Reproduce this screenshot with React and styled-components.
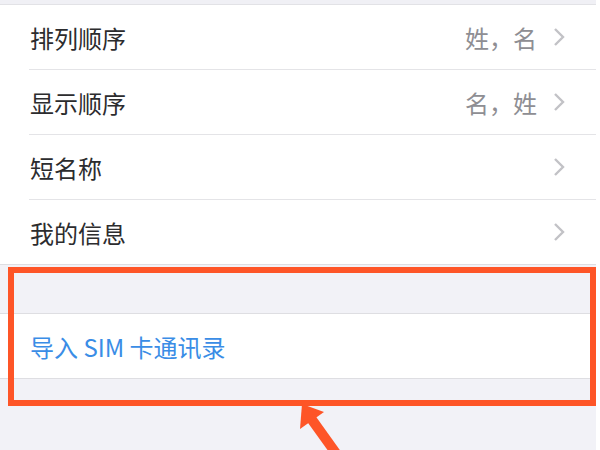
import React from "react";
import styled, { createGlobalStyle } from "styled-components";

const rows = [
  { label: "排列顺序", value: "姓，名" },
  { label: "显示顺序", value: "名，姓" },
  { label: "短名称", value: "" },
  { label: "我的信息", value: "" },
];

const Chevron = () => (
  <svg width="12" height="20" viewBox="0 0 12 20">
    <path d="M2 2 L10 10 L2 18" fill="none" stroke="#c2c2c6" strokeWidth="2.4" />
  </svg>
);

const App = () => {
  return (
    <>
      <GlobalStyle />
      <Screen>
        <TopStrip />
        <Group>
          {rows.map((row) => (
            <Row key={row.label}>
              <Label>{row.label}</Label>
              <Right>
                {row.value && <Value>{row.value}</Value>}
                <Chevron />
              </Right>
            </Row>
          ))}
        </Group>
        <Gap />
        <Group>
          <Row>
            <Action>导入 SIM 卡通讯录</Action>
          </Row>
        </Group>
        <Fill />
        <Highlight />
        <Arrow width="80" height="60" viewBox="0 0 80 60">
          <polygon points="12,9 10,34 34,17" fill="#fe5527" />
          <line x1="20" y1="22" x2="58" y2="75" stroke="#fe5527" strokeWidth="10" />
        </Arrow>
      </Screen>
    </>
  );
};

const GlobalStyle = createGlobalStyle`
  html, body {
    margin: 0;
    padding: 0;
    background: #ffffff;
  }
`;

const Screen = styled.div`
  position: relative;
  width: 596px;
  height: 450px;
  display: flex;
  flex-direction: column;
  background: #f2f2f7;
  overflow: hidden;
  font-family: "Noto Sans CJK SC", "Noto Sans", sans-serif;
`;

const TopStrip = styled.div`
  height: 4px;
  background: #f0f0f5;
  border-bottom: 1px solid #e2e2e6;
`;

const Group = styled.div`
  background: #ffffff;
  border-bottom: 1px solid #dedee2;
`;

const Row = styled.div`
  height: 64px;
  margin-left: 29px;
  padding-left: 1px;
  padding-right: 31px;
  display: flex;
  align-items: center;
  justify-content: space-between;
  border-bottom: 1px solid #e4e4e7;
  &:last-child {
    border-bottom: none;
  }
`;

const Label = styled.div`
  font-size: 24px;
  color: #2c2c2e;
`;

const Right = styled.div`
  display: flex;
  align-items: center;
  gap: 16px;
`;

const Value = styled.div`
  font-size: 24px;
  color: #8e8e93;
`;

const Action = styled.div`
  font-size: 24px;
  color: #3a8de6;
`;

const Gap = styled.div`
  height: 48px;
  border-bottom: 1px solid #dedee2;
`;

const Fill = styled.div`
  flex: 1;
`;

const Highlight = styled.div`
  position: absolute;
  left: 8px;
  top: 267px;
  width: 588px;
  height: 139px;
  box-sizing: border-box;
  border: 6px solid #fe5527;
`;

const Arrow = styled.svg`
  position: absolute;
  left: 290px;
  top: 395px;
`;

export default App;
